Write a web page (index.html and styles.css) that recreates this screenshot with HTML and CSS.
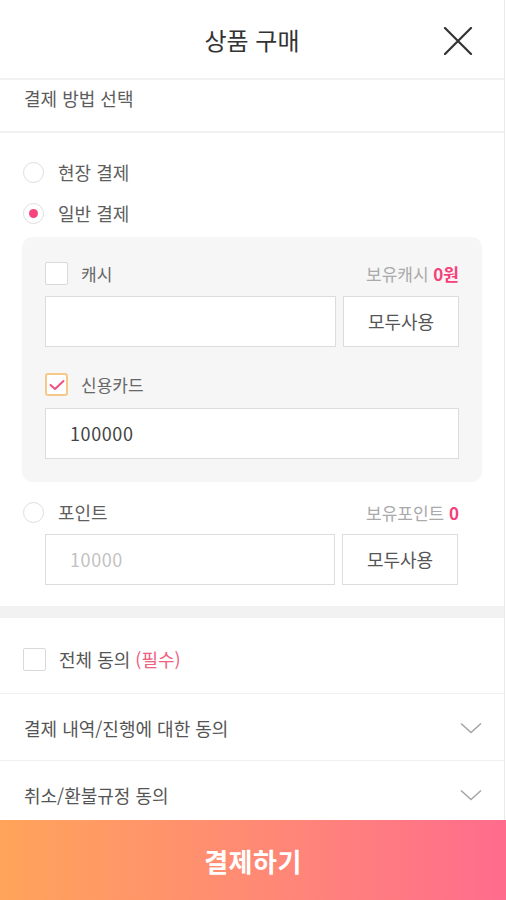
FILE: index.html
```html
<!DOCTYPE html>
<html lang="ko">
<head>
<meta charset="utf-8">
<title>상품 구매</title>
<link rel="stylesheet" href="styles.css">
</head>
<body>
<div class="page">
  <header class="header">
    <h1 class="title">상품 구매</h1>
    <button class="close" aria-label="닫기">
      <svg width="30" height="28" viewBox="0 0 30 28"><path d="M2 1 L28 27 M28 1 L2 27" stroke="#333" stroke-width="2.2" fill="none" stroke-linecap="round"/></svg>
    </button>
  </header>
  <div class="section-title">결제 방법 선택</div>
  <div class="methods">
    <label class="radio-row"><span class="radio"></span><span class="radio-label">현장 결제</span></label>
    <label class="radio-row"><span class="radio on"></span><span class="radio-label">일반 결제</span></label>
    <div class="panel">
      <div class="opt-row">
        <span class="check"></span><span class="opt-label">캐시</span>
        <span class="own">보유캐시 <b>0원</b></span>
      </div>
      <div class="field-row">
        <div class="input"></div>
        <button class="all-btn">모두사용</button>
      </div>
      <div class="opt-row opt-gap">
        <span class="check checked"><svg width="16" height="12" viewBox="0 0 16 12"><path d="M1.5 6 L6 10 L14.5 2" stroke="#f0517f" stroke-width="2" fill="none" stroke-linecap="round" stroke-linejoin="round"/></svg></span><span class="opt-label">신용카드</span>
      </div>
      <div class="field-row card-field">
        <div class="input full">100000</div>
      </div>
    </div>
    <div class="point-row">
      <span class="radio"></span><span class="radio-label">포인트</span>
      <span class="own">보유포인트 <b>0</b></span>
    </div>
    <div class="field-row point-field">
      <div class="input placeholder">10000</div>
      <button class="all-btn">모두사용</button>
    </div>
  </div>
  <div class="thick-divider"></div>
  <div class="agree-all">
    <span class="check"></span><span class="agree-label">전체 동의 <em>(필수)</em></span>
  </div>
  <div class="agree-item">
    <span>결제 내역/진행에 대한 동의</span>
    <svg class="chev" width="22" height="12" viewBox="0 0 22 12"><path d="M1 1.5 L11 10.5 L21 1.5" stroke="#a6a6a6" stroke-width="1.6" fill="none"/></svg>
  </div>
  <div class="agree-item">
    <span>취소/환불규정 동의</span>
    <svg class="chev" width="22" height="12" viewBox="0 0 22 12"><path d="M1 1.5 L11 10.5 L21 1.5" stroke="#a6a6a6" stroke-width="1.6" fill="none"/></svg>
  </div>
</div>
<button class="pay-btn">결제하기</button>
</body>
</html>
```
FILE: styles.css
```css
* { box-sizing: border-box; margin: 0; padding: 0; }
html, body { width: 506px; height: 900px; overflow: hidden; }
body {
  font-family: "Noto Sans CJK KR", "Noto Sans", sans-serif;
  color: #555;
  background: #fff;
  display: flex;
  flex-direction: column;
}
button { font-family: inherit; background: none; border: none; cursor: pointer; }
.page {
  width: 505px;
  height: 820px;
  border-right: 1px solid #e9e9e9;
  display: flex;
  flex-direction: column;
}
.header {
  height: 80px;
  border-bottom: 2px solid #f1f1f1;
  display: flex;
  align-items: center;
  justify-content: center;
  position: relative;
}
.title {
  font-size: 24px;
  font-weight: 400;
  color: #333;
  margin-top: 2px;
}
.close {
  position: absolute;
  right: 31px;
  top: 27px;
  width: 30px;
  height: 28px;
}
.close svg { display: block; }
.section-title {
  height: 53px;
  border-bottom: 2px solid #f1f1f1;
  padding: 4px 0 0 24px;
  font-size: 18px;
  color: #5c5c5c;
  line-height: 28px;
}
.methods {
  padding: 19px 22px 0 22px;
  display: flex;
  flex-direction: column;
}
.radio-row, .point-row {
  display: flex;
  align-items: center;
  height: 41px;
  gap: 14px;
}
.radio {
  width: 21px;
  height: 21px;
  border-radius: 50%;
  border: 1.5px solid #dedede;
  display: flex;
  align-items: center;
  justify-content: center;
  flex: none;
  margin-left: 1px;
}
.radio.on::after {
  content: "";
  width: 9px;
  height: 9px;
  border-radius: 50%;
  background: #f5457c;
}
.radio-label { font-size: 18px; color: #5e5e5e; }
.panel {
  margin-top: 3px;
  background: #f6f6f6;
  border-radius: 10px;
  padding: 25px 23px 23px 23px;
}
.opt-row {
  display: flex;
  align-items: center;
  height: 24px;
  gap: 13px;
}
.opt-gap { margin-top: 26px; }
.check {
  width: 23px;
  height: 23px;
  border: 1.5px solid #d9d9d9;
  background: #fff;
  border-radius: 2px;
  flex: none;
  display: flex;
  align-items: center;
  justify-content: center;
}
.check.checked { border: 2px solid #f6c98a; border-radius: 3px; }
.opt-label { font-size: 17px; color: #666; }
.own {
  margin-left: auto;
  font-size: 17px;
  color: #aaa;
}
.own b { color: #f5407a; font-weight: 700; }
.field-row {
  display: flex;
  gap: 7px;
  margin-top: 10px;
}
.card-field { margin-top: 11px; }
.input {
  flex: 1;
  height: 51px;
  background: #fff;
  border: 1.5px solid #dcdcdc;
  font-size: 18px;
  letter-spacing: 0.6px;
  color: #444;
  display: flex;
  align-items: center;
  padding-left: 24px;
}
.input.placeholder { color: #c2c2c2; }
.all-btn {
  width: 116px;
  height: 51px;
  background: #fff;
  border: 1.5px solid #dcdcdc;
  font-size: 18px;
  color: #555;
}
.point-row { margin-top: 10px; }
.point-row .own { margin-right: 23px; }
.point-field { margin: 1px 24px 0 23px; }
.thick-divider {
  margin-top: 21px;
  height: 12px;
  background: #f2f2f3;
}
.agree-all {
  height: 77px;
  border-bottom: 1.5px solid #efefef;
  display: flex;
  align-items: center;
  gap: 13px;
  padding: 8px 0 0 23px;
}
.agree-label { font-size: 18px; color: #555; }
.agree-label em { font-style: normal; color: #f0607f; }
.agree-item {
  height: 67px;
  border-bottom: 1.5px solid #efefef;
  display: flex;
  align-items: center;
  justify-content: space-between;
  padding: 2px 22px 0 24px;
  font-size: 18px;
  color: #555;
}
.agree-item:last-child { border-bottom: none; height: 59px; padding-top: 9px; }
.chev { display: block; }
.pay-btn {
  width: 506px;
  height: 80px;
  background: linear-gradient(90deg, #ffa45a 0%, #ff8a74 50%, #ff6c8d 100%);
  color: #fff;
  font-size: 26px;
  font-weight: 700;
  letter-spacing: 0.5px;
}
```
